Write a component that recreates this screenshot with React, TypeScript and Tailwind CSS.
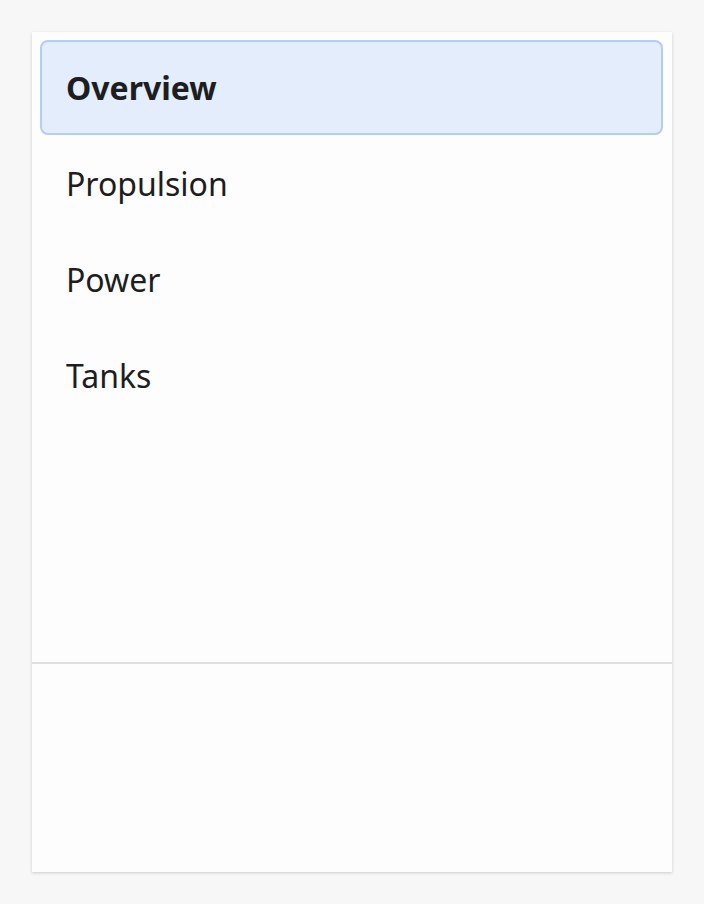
import { useState } from "react";

const tabs = ["Overview", "Propulsion", "Power", "Tanks"];

export default function App() {
  const [active, setActive] = useState("Overview");

  return (
    <div
      className="min-h-screen bg-[#f7f7f7] p-8"
      style={{ fontFamily: '"Noto Sans", "Open Sans", sans-serif' }}
    >
      <div className="flex h-[840px] w-[640px] flex-col bg-[#fdfdfd] shadow-[0_1px_3px_rgba(0,0,0,0.18)]">
        <div className="flex h-[630px] flex-col gap-px p-2 pr-[9px]">
          {tabs.map((tab) => (
            <button
              key={tab}
              onClick={() => setActive(tab)}
              className={
                tab === active
                  ? "flex h-[95px] items-center rounded-lg border-2 border-[#b4cdf3] bg-[#e3edfc] px-6 text-left text-[32px] font-bold text-[#1c1e21]"
                  : "flex h-[95px] items-center rounded-lg border-2 border-transparent px-6 text-left text-[32px] text-[#1c1e21]"
              }
            >
              {tab}
            </button>
          ))}
        </div>
        <div className="border-t-2 border-[#dedede]" />
      </div>
    </div>
  );
}
